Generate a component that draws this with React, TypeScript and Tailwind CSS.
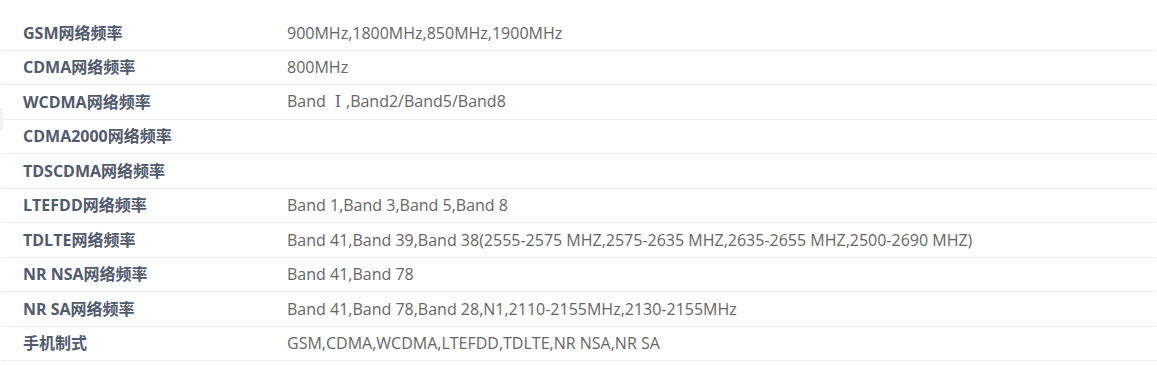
import React from "react";

const rows: [string, React.ReactNode][] = [
  ["GSM网络频率", "900MHz,1800MHz,850MHz,1900MHz"],
  ["CDMA网络频率", "800MHz"],
  [
    "WCDMA网络频率",
    <>
      Band{" "}
      <span
        className="inline-block w-[16px] text-center"
        style={{ fontFamily: '"DejaVu Serif", "Liberation Serif", serif' }}
      >
        Ⅰ
      </span>
      ,Band2/Band5/Band8
    </>,
  ],
  ["CDMA2000网络频率", ""],
  ["TDSCDMA网络频率", ""],
  ["LTEFDD网络频率", "Band 1,Band 3,Band 5,Band 8"],
  ["TDLTE网络频率", "Band 41,Band 39,Band 38(2555-2575 MHZ,2575-2635 MHZ,2635-2655 MHZ,2500-2690 MHZ)"],
  ["NR NSA网络频率", "Band 41,Band 78"],
  ["NR SA网络频率", "Band 41,Band 78,Band 28,N1,2110-2155MHz,2130-2155MHz"],
  ["手机制式", "GSM,CDMA,WCDMA,LTEFDD,TDLTE,NR NSA,NR SA"],
];

export default function App() {
  return (
    <div
      className="w-[1157px] h-[365px] bg-white relative"
      style={{ fontFamily: '"Open Sans", "Noto Sans CJK SC", sans-serif' }}
    >
      <div className="absolute left-0 top-[108px] w-[3px] h-[23px] bg-[#f3f3f3]" />
      <div className="pt-[16px] pl-[2px] pr-[1px]">
        {rows.map(([k, v], i) => (
          <div
            key={i}
            className="flex items-center h-[34.5px] border-b border-[#e8edf3]"
          >
            <div className="w-[285px] pl-[21px] text-[16px] font-bold text-[#515a6e] whitespace-nowrap">
              {k}
            </div>
            <div className="text-[16px] text-[#666] whitespace-nowrap">{v}</div>
          </div>
        ))}
      </div>
    </div>
  );
}
